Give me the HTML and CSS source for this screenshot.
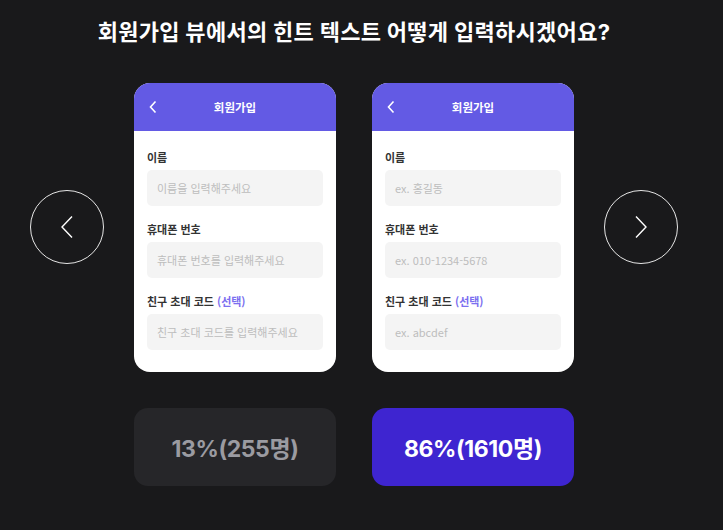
FILE: index.html
```html
<!DOCTYPE html>
<html lang="ko">
<head>
    <meta charset="UTF-8">
    <meta name="viewport" content="width=device-width, initial-scale=1.0">
    <title>힌트 텍스트 투표</title>
    <link rel="stylesheet" href="styles.css">
</head>
<body>
    <main class="page">
        <h1 class="question">회원가입 뷰에서의 힌트 텍스트 어떻게 입력하시겠어요?</h1>

        <div class="stage">
            <button class="nav-btn" aria-label="이전">
                <svg width="14" height="24" viewBox="0 0 14 24"><path d="M12 1.5 L2 12 L12 22.5" fill="none" stroke="#fff" stroke-width="1.4"/></svg>
            </button>

            <div class="choices">
                <div class="choice">
                    <div class="phone">
                        <div class="phone-head">
                            <svg class="back" width="10" height="14" viewBox="0 0 10 14"><path d="M7.5 1.5 L2.5 7 L7.5 12.5" fill="none" stroke="#fff" stroke-width="1.6"/></svg>
                            <span>회원가입</span>
                        </div>
                        <div class="phone-body">
                            <div class="field">
                                <label>이름</label>
                                <div class="input">이름을 입력해주세요</div>
                            </div>
                            <div class="field">
                                <label>휴대폰 번호</label>
                                <div class="input">휴대폰 번호를 입력해주세요</div>
                            </div>
                            <div class="field">
                                <label>친구 초대 코드 <em>(선택)</em></label>
                                <div class="input">친구 초대 코드를 입력해주세요</div>
                            </div>
                        </div>
                    </div>
                    <div class="result">13%(255명)</div>
                </div>

                <div class="choice">
                    <div class="phone">
                        <div class="phone-head">
                            <svg class="back" width="10" height="14" viewBox="0 0 10 14"><path d="M7.5 1.5 L2.5 7 L7.5 12.5" fill="none" stroke="#fff" stroke-width="1.6"/></svg>
                            <span>회원가입</span>
                        </div>
                        <div class="phone-body">
                            <div class="field">
                                <label>이름</label>
                                <div class="input">ex. 홍길동</div>
                            </div>
                            <div class="field">
                                <label>휴대폰 번호</label>
                                <div class="input">ex. 010-1234-5678</div>
                            </div>
                            <div class="field">
                                <label>친구 초대 코드 <em>(선택)</em></label>
                                <div class="input">ex. abcdef</div>
                            </div>
                        </div>
                    </div>
                    <div class="result picked">86%(1610명)</div>
                </div>
            </div>

            <button class="nav-btn" aria-label="다음">
                <svg width="14" height="24" viewBox="0 0 14 24"><path d="M2 1.5 L12 12 L2 22.5" fill="none" stroke="#fff" stroke-width="1.4"/></svg>
            </button>
        </div>
    </main>
</body>
</html>
```

FILE: styles.css
```css
* {
    margin: 0;
    padding: 0;
    box-sizing: border-box;
}

body {
    font-family: Inter, 'Noto Sans CJK KR', sans-serif;
    background: #19191b;
    color: white;
    height: 530px;
    overflow: hidden;
}

.page {
    width: 708px;
    display: flex;
    flex-direction: column;
    align-items: center;
}

.question {
    margin-top: 18px;
    font-size: 22px;
    line-height: 28px;
    font-weight: 700;
    letter-spacing: 0.3px;
}

/* 카드와 좌우 버튼 */
.stage {
    margin-top: 37px;
    display: flex;
    align-items: flex-start;
    gap: 30px;
}

.nav-btn {
    width: 74px;
    height: 74px;
    margin-top: 107px;
    border-radius: 50%;
    border: 1px solid #e6e6e6;
    background: transparent;
    display: flex;
    align-items: center;
    justify-content: center;
    cursor: pointer;
}

.choices {
    display: flex;
    gap: 36px;
}

.choice {
    width: 202px;
    display: flex;
    flex-direction: column;
    gap: 36px;
}

.phone {
    background: #fff;
    border-radius: 16px;
    overflow: hidden;
    height: 289px;
}

.phone-head {
    height: 48px;
    background: #635ae4;
    position: relative;
    display: flex;
    align-items: center;
    justify-content: center;
    font-family: 'Noto Sans CJK KR', sans-serif;
    font-size: 11.5px;
    font-weight: 700;
}

.phone-head .back {
    position: absolute;
    left: 14px;
    top: 17px;
}

.phone-body {
    padding: 19px 13px 0;
    display: flex;
    flex-direction: column;
    gap: 16px;
    font-family: 'Noto Sans CJK KR', sans-serif;
}

.field label {
    display: block;
    font-size: 11px;
    line-height: 14px;
    font-weight: 700;
    color: #333;
    margin-bottom: 6px;
}

.field em {
    font-style: normal;
    color: #7b6ff0;
}

.input {
    height: 36px;
    border-radius: 5px;
    background: #f4f4f4;
    padding-left: 10px;
    display: flex;
    align-items: center;
    font-size: 11px;
    color: #bdbdbd;
}

.result {
    height: 78px;
    border-radius: 14px;
    background: #262629;
    color: #9b9ba1;
    display: flex;
    align-items: center;
    justify-content: center;
    font-size: 23px;
    font-weight: 700;
    letter-spacing: -0.4px;
}

.result.picked {
    background: #3e25d0;
    color: #fff;
}
```
